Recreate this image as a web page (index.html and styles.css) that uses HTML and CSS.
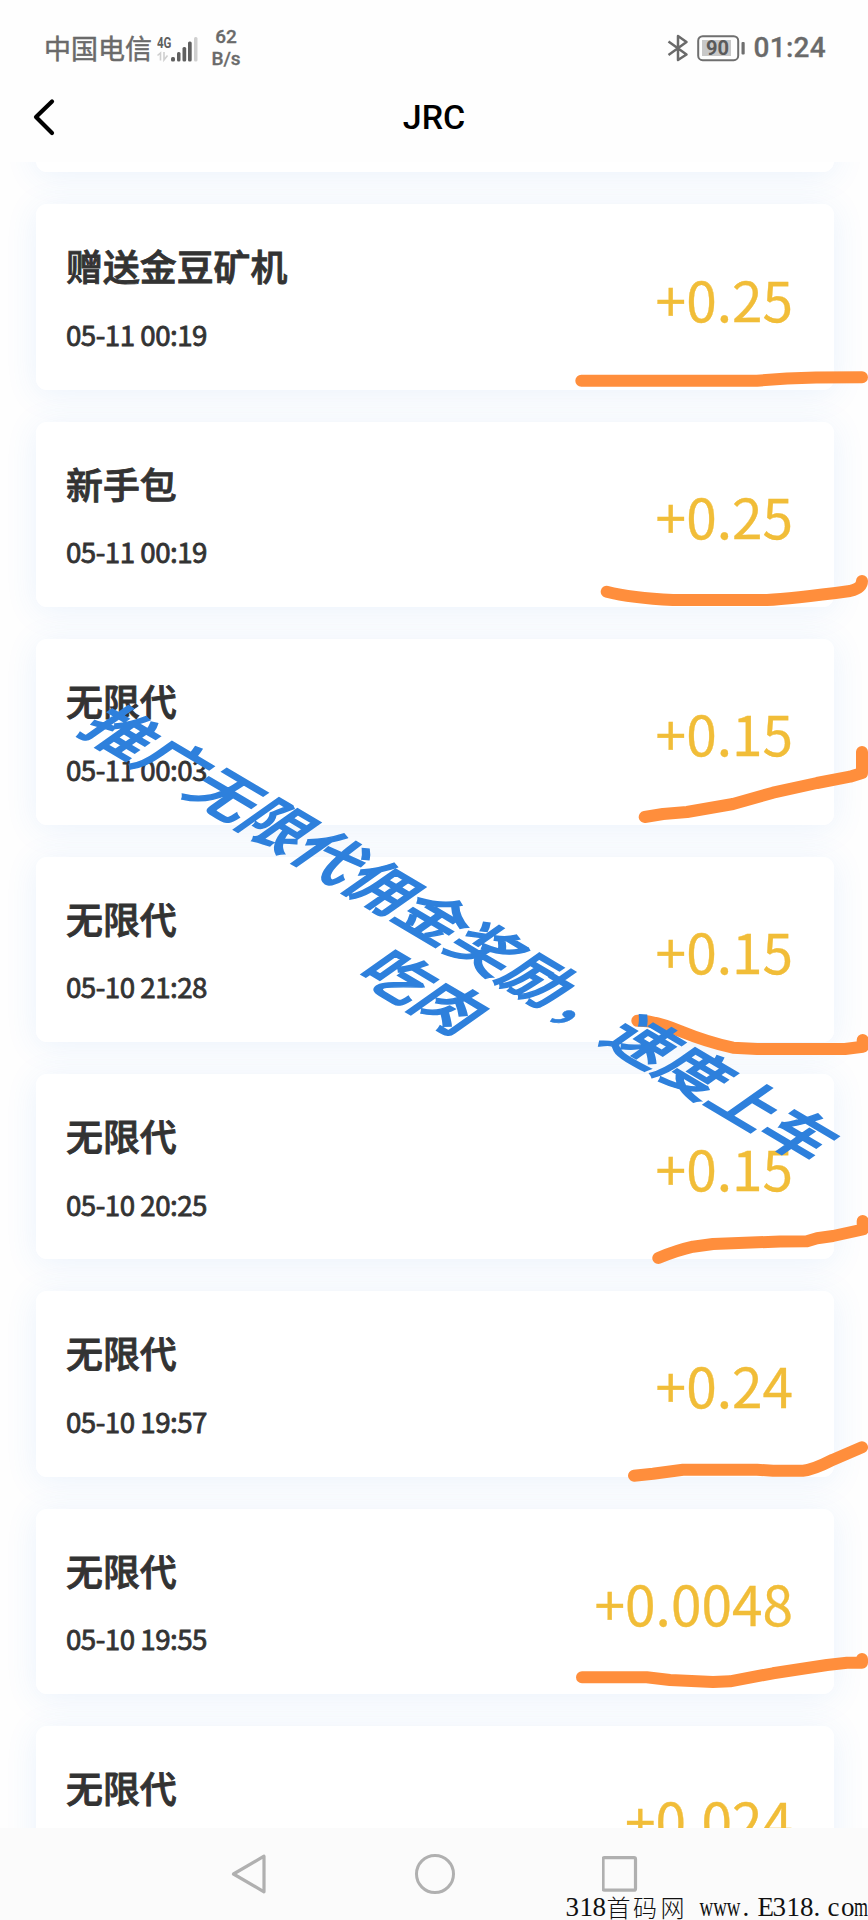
FILE: index.html
```html
<!DOCTYPE html>
<html lang="zh-CN">
<head>
<meta charset="utf-8">
<title>JRC</title>
<link rel="stylesheet" href="styles.css">
</head>
<body>
<div class="phone">
  <div class="status">
    <span class="carrier">中国电信</span>
    <svg class="signal" width="42" height="30" viewBox="0 0 42 30">
      <text class="net" x="0" y="15" textLength="14.5" lengthAdjust="spacingAndGlyphs">4G</text>
      <path d="M.5 22.500L3.500 20V27.500M7 19V27L10.500 22.500" fill="none" stroke="#cfcfcf" stroke-width="1.600"/>
      <g fill="#5f5f5f">
        <rect x="14" y="24" width="4" height="4.500" rx="1.500"/>
        <rect x="20" y="19" width="3.500" height="9.500" rx="1.500"/>
        <rect x="25.500" y="14" width="3.700" height="14.500" rx="1.500"/>
        <rect x="31" y="8.500" width="3.700" height="20" rx="1.500"/>
      </g>
      <rect x="37" y="4" width="3.500" height="24.500" rx="1.500" fill="#cfcfcf"/>
    </svg>
    <span class="speed">62<br>B/s</span>
    <span class="spacer"></span>
    <svg class="bt" width="22" height="28" viewBox="0 0 22 28">
      <path d="M1.500 7.500L19.500 20.500L11 26V2L19.500 8L1.500 21" fill="none" stroke="#6a6a6a" stroke-width="2.500" stroke-linejoin="round"/>
    </svg>
    <svg class="battery" width="50" height="28" viewBox="0 0 50 28">
      <rect x="1.200" y="2.200" width="40" height="24" rx="4.500" fill="none" stroke="#6f6f6f" stroke-width="2"/>
      <rect x="5" y="6" width="29" height="16" fill="#c8c8c8"/>
      <rect x="44.500" y="8" width="3.200" height="12.500" rx="1" fill="#6f6f6f"/>
      <text class="level" x="9" y="20.500" textLength="23" lengthAdjust="spacingAndGlyphs">90</text>
    </svg>
    <span class="clock">01:24</span>
  </div>
  <div class="titlebar">
    <svg class="back" width="26" height="40" viewBox="0 0 26 40">
      <path d="M20 4.500L4 20L20 36" fill="none" stroke="#000" stroke-width="4.200" stroke-linecap="round" stroke-linejoin="round"/>
    </svg>
    <h1>JRC</h1>
  </div>
  <div class="list">
    <div class="card"></div>
    <div class="card"><div class="info"><div class="name">赠送金豆矿机</div><div class="date">05-11 00:19</div></div><div class="amount">+0.25</div></div>
    <div class="card"><div class="info"><div class="name">新手包</div><div class="date">05-11 00:19</div></div><div class="amount">+0.25</div></div>
    <div class="card"><div class="info"><div class="name">无限代</div><div class="date">05-11 00:03</div></div><div class="amount">+0.15</div></div>
    <div class="card"><div class="info"><div class="name">无限代</div><div class="date">05-10 21:28</div></div><div class="amount">+0.15</div></div>
    <div class="card"><div class="info"><div class="name">无限代</div><div class="date">05-10 20:25</div></div><div class="amount">+0.15</div></div>
    <div class="card"><div class="info"><div class="name">无限代</div><div class="date">05-10 19:57</div></div><div class="amount">+0.24</div></div>
    <div class="card"><div class="info"><div class="name">无限代</div><div class="date">05-10 19:55</div></div><div class="amount">+0.0048</div></div>
    <div class="card"><div class="info"><div class="name">无限代</div></div><div class="amount">+0.024</div></div>
  </div>
  <div class="navbar">
    <svg width="36" height="42" viewBox="0 0 36 42"><path d="M2.500 21L33 3.200V38.800Z" fill="none" stroke="#b0b0b0" stroke-width="3.200" stroke-linejoin="round"/></svg>
    <svg width="42" height="42" viewBox="0 0 42 42"><circle cx="21" cy="21" r="18.500" fill="none" stroke="#b0b0b0" stroke-width="3"/></svg>
    <svg class="recent" width="36" height="42" viewBox="0 0 36 42"><rect x="1" y="4.700" width="32.500" height="32.500" rx="1.500" fill="none" stroke="#b0b0b0" stroke-width="3.200"/></svg>
  </div>
  <svg class="overlay" width="868" height="1920" viewBox="0 0 868 1920">
    <g class="marker">
      <path d="M581.300 380.700H757L787 378.500L816 377.500L862 377.300"/>
      <path d="M606.700 591.700Q631 598 673 600H767Q790 599 850 591Q862 588 862 581"/>
      <path d="M644.700 817L663 814L687 812L733 804L773 792.700L817 783L850 776.700L862 773V752"/>
      <path d="M637.300 1020.700Q653 1020 680 1031T733 1047.700L757 1049H845L862.700 1046.700V1040"/>
      <path d="M658.300 1258Q678 1250 693 1246.700L713 1244L780 1241.500L807 1241.300L817 1238.300L833 1236L862.700 1229.500V1221"/>
      <path d="M634 1475.700L653 1473.700L683 1469.700H757L773 1470.700H803Q813 1470 833 1459.700L862 1447.300"/>
      <path d="M582 1677.300H646.700L670 1680L713 1682L730 1681.300L773 1673.300L827 1665L847 1662.700H862V1659"/>
    </g>
    <g class="slogan" transform="matrix(.869 .515 -.85 .6 122.500 733)">
      <text x="-30" y="22.800">推广无限代佣金奖励<tspan class="comma" dx="3" dy="2">，</tspan><tspan dx="-3" dy="-2">速度上车</tspan></text>
      <text x="359" y="95.500">吃肉</text>
    </g>
    <g class="site">
      <text x="565.500 579.500 592.500" y="1916">318</text>
      <text class="site-cjk" x="606.500 633 660.500" y="1917">首码网</text>
      <text x="699.500" y="1916" textLength="41" lengthAdjust="spacingAndGlyphs">www</text>
      <text x="742.500 757.500 772.500 786.500 800 813.500 827.500 841" y="1916">.E318.co</text>
      <text x="854" y="1916" textLength="14" lengthAdjust="spacingAndGlyphs">m</text>
    </g>
  </svg>
</div>
</body>
</html>
```
FILE: styles.css
```css
* { box-sizing: border-box; }
body { margin: 0; background: #fefefe; font-family: "Noto Sans CJK SC", sans-serif; }
.phone { position: relative; width: 868px; height: 1920px; display: flex; flex-direction: column; overflow: hidden; background: #fefefe; }
svg { display: block; flex: none; }

.status { height: 76px; flex: none; padding: 20px 42px 0 44px; display: flex; align-items: center; color: #6a6a6a; }
.carrier { font-size: 27px; line-height: 40px; width: 109px; white-space: nowrap; -webkit-text-stroke: .5px; }
.signal { margin-left: 4px; }
.net { font: 700 15px Roboto, sans-serif; fill: #5f5f5f; }
.speed { width: 40px; margin-left: 7px; text-align: center; font: 500 19px/22px Roboto, sans-serif; -webkit-text-stroke: .3px; }
.spacer { flex: 1; }
.battery { margin-left: 8px; }
.level { font: 700 20px Roboto, sans-serif; fill: #5a5a5a; }
.clock { margin-left: 6px; font: 500 28px/40px Roboto, sans-serif; letter-spacing: .3px; -webkit-text-stroke: .3px; }

.titlebar { height: 86px; flex: none; display: grid; grid-template-columns: 80px 1fr 80px; align-items: center; padding-bottom: 4px; }
.back { margin-left: 32px; }
h1 { margin: 0; text-align: center; font: 500 34px/44px Roboto, sans-serif; color: #000; }

.list { flex: 1; min-height: 0; overflow: hidden; isolation: isolate; padding: 0 34px 0 36px; }
.card { position: relative; height: 185.370px; margin-bottom: 32px; padding: 0 41px 0 30px; display: flex; justify-content: space-between; align-items: center; background: #fff; border-radius: 11px; }
.card:first-child { margin-top: -174.900px; }
.card::before { content: ""; position: absolute; inset: 0; z-index: -1; border-radius: 11px; box-shadow: 0 4px 32px rgba(60, 140, 235, .1); }
.info { align-self: flex-start; padding-top: 36px; color: #333; }
.name { font-size: 36.900px; line-height: 50px; font-weight: 500; -webkit-text-stroke: .9px; }
.date { margin-top: 23.600px; font-size: 27.700px; line-height: 40px; letter-spacing: -.5px; -webkit-text-stroke: .8px; }
.amount { font-size: 55px; line-height: 80px; padding-top: 1px; color: #f1bd38; -webkit-text-stroke: .3px; }

.navbar { height: 92px; flex: none; background: #fbfbfb; display: flex; justify-content: center; align-items: center; gap: 147px; }
.recent { margin-left: -1px; }
.overlay { position: absolute; inset: 0; }
.marker { fill: none; stroke: #ff8e3c; stroke-width: 12; stroke-linecap: round; stroke-linejoin: round; }
.slogan { font: 500 60px "Noto Sans CJK SC", sans-serif; fill: #2e80dc; stroke: #2e80dc; stroke-width: 1.800; }
.comma { stroke-width: .5; }
.site { font: 27px "Liberation Serif", serif; fill: #111; }
.site-cjk { font: 300 24px "Noto Sans CJK SC", sans-serif; }
```
